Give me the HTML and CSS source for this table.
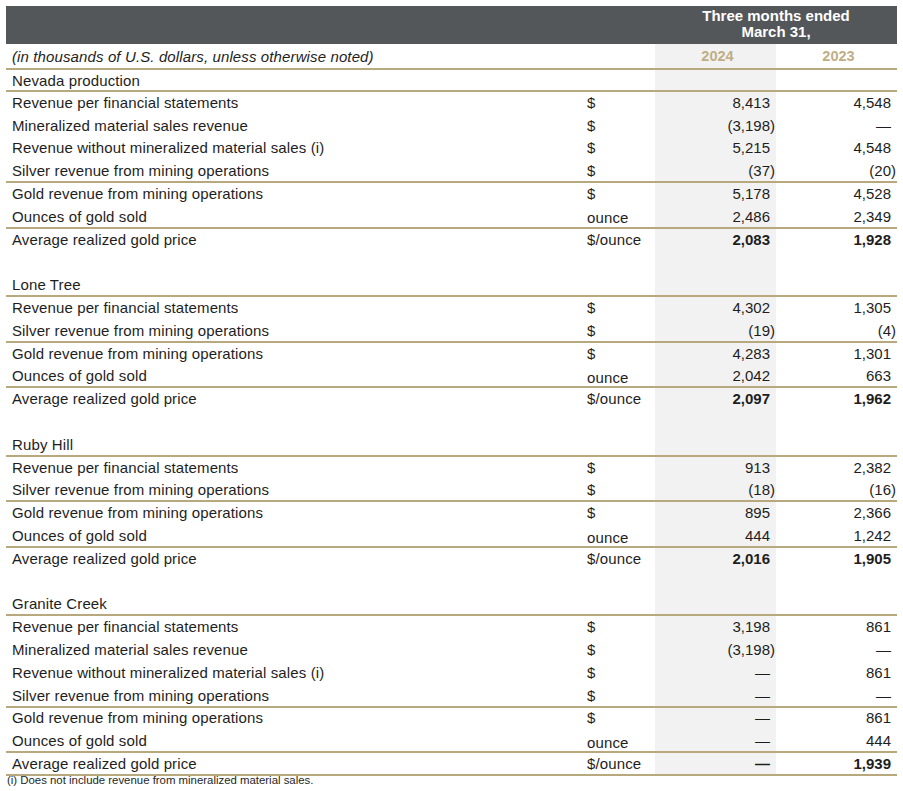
FILE: index.html
```html
<!DOCTYPE html>
<html>
<head>
<meta charset="utf-8">
<link rel="stylesheet" href="styles.css">
</head>
<body>
<div class="table">
  <div class="hdr"><div class="hdr-title">Three months ended<br>March 31,</div></div>
  <div class="row sub rule"><div class="lbl it">(in thousands of U.S. dollars, unless otherwise noted)</div><div class="unit"></div><div class="c24 yr">2024</div><div class="c23 yr">2023</div></div>
  <div class="row sec rule"><div class="lbl">Nevada production</div><div class="unit"></div><div class="c24"></div><div class="c23"></div></div>
  <div class="row"><div class="lbl">Revenue per financial statements</div><div class="unit">$</div><div class="c24">8,413</div><div class="c23">4,548</div></div>
  <div class="row"><div class="lbl">Mineralized material sales revenue</div><div class="unit">$</div><div class="c24"><span class="neg">(3,198)</span></div><div class="c23">—</div></div>
  <div class="row"><div class="lbl">Revenue without mineralized material sales (i)</div><div class="unit">$</div><div class="c24">5,215</div><div class="c23">4,548</div></div>
  <div class="row rule"><div class="lbl">Silver revenue from mining operations</div><div class="unit">$</div><div class="c24"><span class="neg">(37)</span></div><div class="c23"><span class="neg">(20)</span></div></div>
  <div class="row"><div class="lbl">Gold revenue from mining operations</div><div class="unit">$</div><div class="c24">5,178</div><div class="c23">4,528</div></div>
  <div class="row rule"><div class="lbl">Ounces of gold sold</div><div class="unit low">ounce</div><div class="c24">2,486</div><div class="c23">2,349</div></div>
  <div class="row"><div class="lbl">Average realized gold price</div><div class="unit">$/ounce</div><div class="c24 b">2,083</div><div class="c23 b">1,928</div></div>
  <div class="row"><div class="lbl"></div><div class="unit"></div><div class="c24"></div><div class="c23"></div></div>

  <div class="row rule"><div class="lbl">Lone Tree</div><div class="unit"></div><div class="c24"></div><div class="c23"></div></div>
  <div class="row"><div class="lbl">Revenue per financial statements</div><div class="unit">$</div><div class="c24">4,302</div><div class="c23">1,305</div></div>
  <div class="row rule"><div class="lbl">Silver revenue from mining operations</div><div class="unit">$</div><div class="c24"><span class="neg">(19)</span></div><div class="c23"><span class="neg">(4)</span></div></div>
  <div class="row"><div class="lbl">Gold revenue from mining operations</div><div class="unit">$</div><div class="c24">4,283</div><div class="c23">1,301</div></div>
  <div class="row rule"><div class="lbl">Ounces of gold sold</div><div class="unit low">ounce</div><div class="c24">2,042</div><div class="c23">663</div></div>
  <div class="row"><div class="lbl">Average realized gold price</div><div class="unit">$/ounce</div><div class="c24 b">2,097</div><div class="c23 b">1,962</div></div>
  <div class="row"><div class="lbl"></div><div class="unit"></div><div class="c24"></div><div class="c23"></div></div>

  <div class="row rule"><div class="lbl">Ruby Hill</div><div class="unit"></div><div class="c24"></div><div class="c23"></div></div>
  <div class="row"><div class="lbl">Revenue per financial statements</div><div class="unit">$</div><div class="c24">913</div><div class="c23">2,382</div></div>
  <div class="row rule"><div class="lbl">Silver revenue from mining operations</div><div class="unit">$</div><div class="c24"><span class="neg">(18)</span></div><div class="c23"><span class="neg">(16)</span></div></div>
  <div class="row"><div class="lbl">Gold revenue from mining operations</div><div class="unit">$</div><div class="c24">895</div><div class="c23">2,366</div></div>
  <div class="row rule"><div class="lbl">Ounces of gold sold</div><div class="unit low">ounce</div><div class="c24">444</div><div class="c23">1,242</div></div>
  <div class="row"><div class="lbl">Average realized gold price</div><div class="unit">$/ounce</div><div class="c24 b">2,016</div><div class="c23 b">1,905</div></div>
  <div class="row"><div class="lbl"></div><div class="unit"></div><div class="c24"></div><div class="c23"></div></div>

  <div class="row rule"><div class="lbl">Granite Creek</div><div class="unit"></div><div class="c24"></div><div class="c23"></div></div>
  <div class="row"><div class="lbl">Revenue per financial statements</div><div class="unit">$</div><div class="c24">3,198</div><div class="c23">861</div></div>
  <div class="row"><div class="lbl">Mineralized material sales revenue</div><div class="unit">$</div><div class="c24"><span class="neg">(3,198)</span></div><div class="c23">—</div></div>
  <div class="row"><div class="lbl">Revenue without mineralized material sales (i)</div><div class="unit">$</div><div class="c24">—</div><div class="c23">861</div></div>
  <div class="row rule"><div class="lbl">Silver revenue from mining operations</div><div class="unit">$</div><div class="c24">—</div><div class="c23">—</div></div>
  <div class="row"><div class="lbl">Gold revenue from mining operations</div><div class="unit">$</div><div class="c24">—</div><div class="c23">861</div></div>
  <div class="row rule"><div class="lbl">Ounces of gold sold</div><div class="unit low">ounce</div><div class="c24">—</div><div class="c23">444</div></div>
  <div class="row rule"><div class="lbl">Average realized gold price</div><div class="unit">$/ounce</div><div class="c24 b">—</div><div class="c23 b">1,939</div></div>
  <div class="note">(i) Does not include revenue from mineralized material sales.</div>
</div>
</body>
</html>
```

FILE: styles.css
```css
* { box-sizing: border-box; }
html, body { margin: 0; padding: 0; background: #ffffff; }
body {
  font-family: "Liberation Sans", Arial, sans-serif;
  font-size: 15px;
  letter-spacing: 0.12px;
  color: #1e1e1e;
}
.table {
  margin: 6px 0 0 6px;
  width: 891px;
}
.hdr {
  display: grid;
  grid-template-columns: 581px 68px 121px 121px;
  height: 38px;
  background: #54575a;
}
.hdr-title {
  grid-column: 3 / 5;
  color: #ffffff;
  font-weight: bold;
  text-align: center;
  line-height: 16px;
  padding-top: 2px;
  letter-spacing: 0;
}
.row {
  display: grid;
  grid-template-columns: 581px 68px 121px 121px;
  height: 22.8px;
}
.row > div {
  display: flex;
  align-items: center;
  border-bottom: 2px solid transparent;
  white-space: nowrap;
}
.row.rule > div { border-bottom-color: #b8a87d; }
.row.sub { height: 26px; }
.row.sec { height: 22px; }
.lbl { padding-left: 6px; }
.it { font-style: italic; }
.unit { padding-left: 0; }
.unit.low { padding-top: 3px; }
.c24, .c23 {
  justify-content: flex-end;
  padding-right: 6px;
  letter-spacing: 0;
}
.c24 { background: #f2f2f2; }
.neg { margin-right: -5px; }
.b { font-weight: bold; }
.yr {
  justify-content: center;
  padding-left: 4px;
  padding-right: 0;
  color: #bfae85;
  font-weight: bold;
  font-size: 14.5px;
}
.note {
  margin-top: -2px;
  padding-left: 1px;
  font-size: 11.4px;
  letter-spacing: 0;
  line-height: 12px;
  color: #1e1e1e;
}
```
